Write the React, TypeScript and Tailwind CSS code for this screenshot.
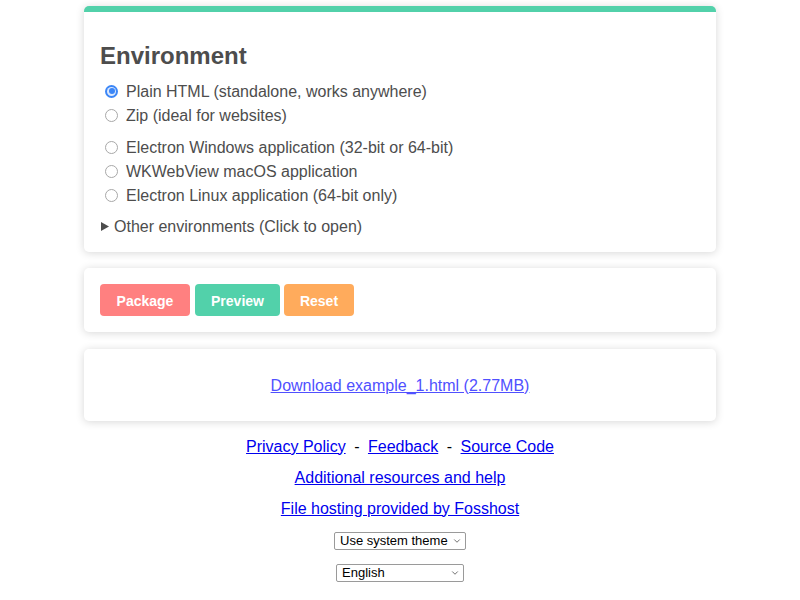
import { ChevronDown } from 'lucide-react';

const RADIOS_A = [
  { label: 'Plain HTML (standalone, works anywhere)', checked: true },
  { label: 'Zip (ideal for websites)', checked: false },
];

const RADIOS_B = [
  { label: 'Electron Windows application (32-bit or 64-bit)', checked: false },
  { label: 'WKWebView macOS application', checked: false },
  { label: 'Electron Linux application (64-bit only)', checked: false },
];

function Radio({ label, checked }: { label: string; checked: boolean }) {
  return (
    <label className="flex items-center h-6 leading-6 text-[16px] text-[#4d4d4d]">
      {checked ? (
        <span className="ml-[5px] mr-[8px] w-[13px] h-[13px] rounded-full bg-[#3b86f7] flex items-center justify-center">
          <span className="w-[9px] h-[9px] rounded-full bg-[#dbe8fd] flex items-center justify-center">
            <span className="w-[6px] h-[6px] rounded-full bg-[#3b86f7]" />
          </span>
        </span>
      ) : (
        <span className="ml-[5px] mr-[8px] w-[13px] h-[13px] rounded-full border border-[#a8a8a8] bg-white" />
      )}
      <span className="pt-[1px]">{label}</span>
    </label>
  );
}

function Card({ children, className = '' }: { children: React.ReactNode; className?: string }) {
  return (
    <div className={`bg-white rounded-[5px] shadow-[0_1px_8px_rgba(0,0,0,0.16)] ${className}`}>
      {children}
    </div>
  );
}

export default function App() {
  return (
    <div className="min-h-[600px] bg-white font-['Liberation_Sans',Arial,sans-serif]">
      <div className="w-[632px] mx-auto pt-[6px]">
        {/* Environment */}
        <Card className="border-t-[6px] border-[#52d1aa] px-4 pt-[30px] pb-[14px]">
          <h2 className="text-[24px] leading-[28px] font-bold text-[#4d4d4d]">Environment</h2>
          <div className="mt-[9px]">
            {RADIOS_A.map((r) => (
              <Radio key={r.label} {...r} />
            ))}
          </div>
          <div className="mt-2">
            {RADIOS_B.map((r) => (
              <Radio key={r.label} {...r} />
            ))}
          </div>
          <div className="mt-[7px] flex items-center h-6 text-[16px] text-[#4d4d4d]">
            <svg width="8" height="9" viewBox="0 0 8 9" className="ml-[1px] mr-[5px]">
              <path d="M0 0 L8 4.5 L0 9 Z" fill="#4d4d4d" />
            </svg>
            <span className="pt-[1px]">Other environments (Click to open)</span>
          </div>
        </Card>

        {/* Actions */}
        <Card className="mt-4 p-4 flex">
          <button className="w-[90px] h-8 pt-[2px] rounded-[4px] bg-[#ff8080] text-white text-[14px] font-bold">Package</button>
          <button className="ml-[5px] w-[85px] h-8 pt-[2px] rounded-[4px] bg-[#52d1aa] text-white text-[14px] font-bold">Preview</button>
          <button className="ml-[4px] w-[70px] h-8 pt-[2px] rounded-[4px] bg-[#ffab5c] text-white text-[14px] font-bold">Reset</button>
        </Card>

        {/* Download */}
        <Card className="mt-[17px] pt-[25px] pb-[23px] text-center leading-6">
          <a href="#" className="text-[16px] text-[#5050ff] underline">
            Download example_1.html (2.77MB)
          </a>
        </Card>

        {/* Footer */}
        <div className="mt-[10px] flex flex-col items-center text-[16px] text-[#0000ee]">
          <div className="h-[31px] flex items-center gap-[8.5px]">
            <a href="#" className="underline">Privacy Policy</a>
            <span className="text-black">-</span>
            <a href="#" className="underline">Feedback</a>
            <span className="text-black">-</span>
            <a href="#" className="underline">Source Code</a>
          </div>
          <div className="h-[31px] flex items-center">
            <a href="#" className="underline">Additional resources and help</a>
          </div>
          <div className="h-[31px] flex items-center">
            <a href="#" className="underline">File hosting provided by Fosshost</a>
          </div>
          <div className="mt-[8px] w-[132px] h-[18px] border border-[#9a9a9a] rounded-[2px] bg-white flex items-center justify-between pl-[5px] pr-[3px] text-[13px] text-black">
            <span>Use system theme</span>
            <ChevronDown className="w-[10px] h-[10px] text-[#555]" strokeWidth={2} />
          </div>
          <div className="mt-[14px] w-[128px] h-[18px] border border-[#9a9a9a] rounded-[2px] bg-white flex items-center justify-between pl-[5px] pr-[3px] text-[13px] text-black">
            <span>English</span>
            <ChevronDown className="w-[10px] h-[10px] text-[#555]" strokeWidth={2} />
          </div>
        </div>
      </div>
    </div>
  );
}
